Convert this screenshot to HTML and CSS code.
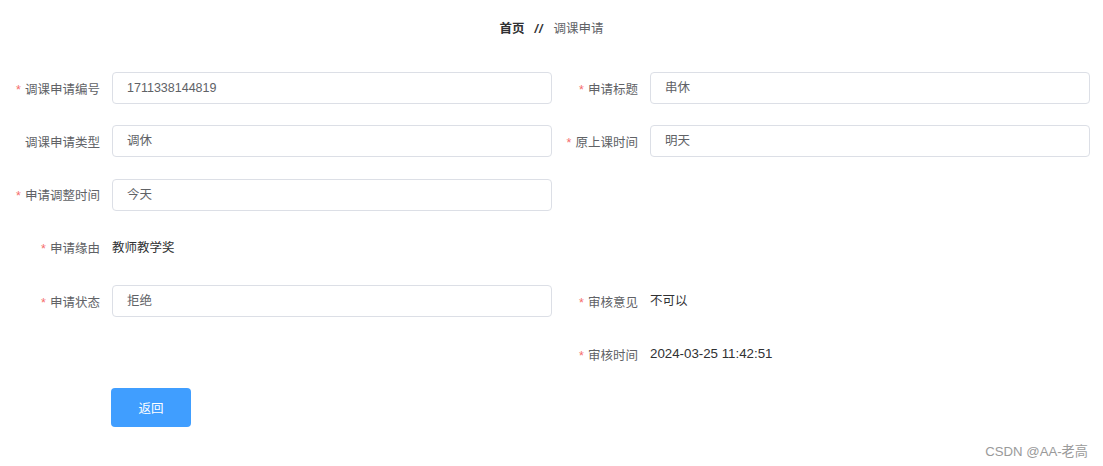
FILE: index.html
```html
<!DOCTYPE html>
<html lang="zh">
<head>
<meta charset="utf-8">
<title>调课申请</title>
<link rel="stylesheet" href="styles.css">
</head>
<body>
<div class="page">
  <div class="breadcrumb">
    <span class="crumb-home">首页</span>
    <span class="crumb-sep">//</span>
    <span class="crumb-current">调课申请</span>
  </div>
  <div class="form">
    <div class="item">
      <label class="label required">调课申请编号</label>
      <div class="input">1711338144819</div>
    </div>
    <div class="item right">
      <label class="label required">申请标题</label>
      <div class="input">串休</div>
    </div>

    <div class="item">
      <label class="label">调课申请类型</label>
      <div class="input">调休</div>
    </div>
    <div class="item right">
      <label class="label required">原上课时间</label>
      <div class="input">明天</div>
    </div>

    <div class="item">
      <label class="label required">申请调整时间</label>
      <div class="input">今天</div>
    </div>
    <div class="item right empty"></div>

    <div class="item">
      <label class="label required">申请缘由</label>
      <div class="static">教师教学奖</div>
    </div>
    <div class="item right empty"></div>

    <div class="item">
      <label class="label required">申请状态</label>
      <div class="input">拒绝</div>
    </div>
    <div class="item right">
      <label class="label required">审核意见</label>
      <div class="static">不可以</div>
    </div>

    <div class="item empty"></div>
    <div class="item right">
      <label class="label required">审核时间</label>
      <div class="static numeric">2024-03-25 11:42:51</div>
    </div>
  </div>
  <div class="actions">
    <button class="btn">返回</button>
  </div>
  <div class="watermark">CSDN @AA-老高</div>
</div>
</body>
</html>
```
FILE: styles.css
```css
* { box-sizing: border-box; }
html, body {
  margin: 0;
  padding: 0;
  background: #ffffff;
}
body {
  font-family: "Liberation Sans", "Noto Sans CJK SC", sans-serif;
  font-size: 12.5px;
  color: #606266;
}
.page {
  position: relative;
  width: 1103px;
  height: 466px;
}
.breadcrumb {
  display: flex;
  justify-content: center;
  align-items: center;
  gap: 10px;
  padding-top: 21px;
  height: 36px;
  line-height: 16px;
  font-size: 12.5px;
}
.crumb-home {
  font-weight: bold;
  color: #303133;
}
.crumb-sep {
  font-weight: bold;
  color: #303133;
  font-style: italic;
  letter-spacing: 1px;
}
.crumb-current {
  color: #606266;
}
.form {
  margin-top: 36px;
  display: grid;
  grid-template-columns: 552px 552px;
  row-gap: 21.3px;
}
.item {
  display: flex;
  align-items: center;
  height: 32px;
}
.label {
  width: 112px;
  flex: none;
  text-align: right;
  padding-right: 12px;
  color: #606266;
  white-space: nowrap;
}
.item.right .label {
  width: 98px;
}
.label.required::before {
  content: "*";
  color: #f56c6c;
  margin-right: 4px;
}
.input {
  width: 440px;
  height: 32px;
  border: 1px solid #dcdfe6;
  border-radius: 4px;
  padding: 0 14px;
  line-height: 30px;
  color: #606266;
}
.static {
  color: #303133;
  line-height: 32px;
}
.static.numeric {
  font-size: 13.3px;
  margin-top: -1px;
}
.actions {
  padding-left: 111px;
  margin-top: 18px;
}
.btn {
  width: 80px;
  height: 39px;
  border: none;
  border-radius: 4px;
  background: #409eff;
  color: #ffffff;
  font-family: "Liberation Sans", "Noto Sans CJK SC", sans-serif;
  font-size: 12.5px;
  padding: 0;
}
.watermark {
  position: absolute;
  right: 15px;
  top: 441px;
  font-size: 13.2px;
  color: #9a9a9a;
}
```
